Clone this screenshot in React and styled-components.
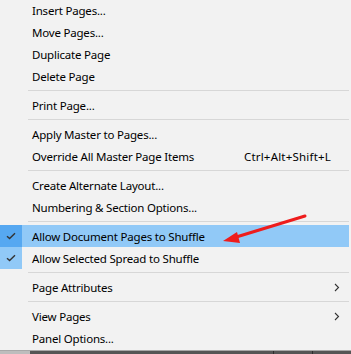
import React from "react";
import styled, { createGlobalStyle } from "styled-components";

const GlobalStyle = createGlobalStyle`
  html, body {
    margin: 0;
    padding: 0;
    background: #f2f2f2;
  }
  body {
    width: 351px;
    height: 354px;
    overflow: hidden;
    font-family: "Segoe UI", "Noto Sans", "Open Sans", sans-serif;
  }
`;

const groups = [
  [
    { label: "Insert Pages..." },
    { label: "Move Pages..." },
    { label: "Duplicate Page" },
    { label: "Delete Page" },
  ],
  [{ label: "Print Page..." }],
  [
    { label: "Apply Master to Pages..." },
    { label: "Override All Master Page Items", shortcut: "Ctrl+Alt+Shift+L" },
  ],
  [
    { label: "Create Alternate Layout..." },
    { label: "Numbering & Section Options..." },
  ],
  [
    { label: "Allow Document Pages to Shuffle", checked: true, hover: true },
    { label: "Allow Selected Spread to Shuffle", checked: true },
  ],
  [{ label: "Page Attributes", submenu: true }],
  [{ label: "View Pages", submenu: true }, { label: "Panel Options..." }],
];

const CheckIcon = () => (
  <svg width="10" height="8" viewBox="0 0 10 8">
    <path d="M1 4.2 L3.6 6.6 L9 1.2" fill="none" stroke="#333" strokeWidth="1.4" />
  </svg>
);

const Chevron = () => (
  <svg width="6" height="9" viewBox="0 0 6 9">
    <path d="M1 1 L4.5 4.5 L1 8" fill="none" stroke="#333" strokeWidth="1.1" />
  </svg>
);

const App = () => {
  return (
    <>
      <GlobalStyle />
      <Page>
        <Menu>
          {groups.map((group, gi) => (
            <React.Fragment key={gi}>
              {gi > 0 && <Separator />}
              {group.map((item) => (
                <Item key={item.label} $hover={item.hover}>
                  <CheckCell $checked={item.checked} $hover={item.hover}>
                    {item.checked && <CheckIcon />}
                  </CheckCell>
                  <Label>{item.label}</Label>
                  {item.shortcut && <Shortcut>{item.shortcut}</Shortcut>}
                  {item.submenu && (
                    <SubArrow>
                      <Chevron />
                    </SubArrow>
                  )}
                </Item>
              ))}
            </React.Fragment>
          ))}
        </Menu>
        <BottomBar>
          <BarLeft />
          <BarTick style={{ left: 273 }} />
          <BarTick style={{ left: 312 }} />
        </BottomBar>
        <RedArrow width="351" height="354" viewBox="0 0 351 354">
          <line x1="305" y1="216" x2="233" y2="238" stroke="#ee1c1c" strokeWidth="3" strokeLinecap="round" />
          <polygon points="223,241 237,232 240,243" fill="#ee1c1c" />
        </RedArrow>
      </Page>
    </>
  );
};

export default App;

const Page = styled.div`
  position: relative;
  width: 351px;
  height: 354px;
  background: #f2f2f2;
  display: flex;
  flex-direction: column;
`;

const Menu = styled.div`
  display: flex;
  flex-direction: column;
  margin-top: -1px;
  padding-right: 2px;
  height: 351px;
`;

const Item = styled.div`
  display: flex;
  align-items: center;
  height: 22px;
  flex-shrink: 0;
  background: ${({ $hover }) => ($hover ? "#91c9f7" : "transparent")};
  font-size: 11.5px;
  color: #000;
`;

const CheckCell = styled.div`
  width: 22px;
  height: 100%;
  display: flex;
  align-items: center;
  justify-content: center;
  flex-shrink: 0;
  background: ${({ $checked, $hover }) =>
    $hover ? "#56a8f1" : $checked ? "#91c9f7" : "transparent"};
`;

const Label = styled.span`
  margin-left: 10px;
  flex: 1;
  white-space: nowrap;
  letter-spacing: -0.2px;
`;

const Shortcut = styled.span`
  margin-right: 18px;
  white-space: nowrap;
  letter-spacing: 0.2px;
`;

const SubArrow = styled.span`
  display: flex;
  align-items: center;
  margin-right: 9px;
`;

const Separator = styled.div`
  height: 1px;
  margin: 3px 0 3px 28px;
  background: #d7d7d7;
  flex-shrink: 0;
`;

const BottomBar = styled.div`
  position: relative;
  flex: 1;
  border-top: 1px solid #a8a8a8;
  background: #555;
  display: flex;
`;

const BarLeft = styled.div`
  width: 30px;
  background: #bdbdbd;
`;

const BarTick = styled.div`
  position: absolute;
  top: 0;
  bottom: 0;
  width: 1px;
  background: #2c2c2c;
`;

const RedArrow = styled.svg`
  position: absolute;
  left: 0;
  top: 0;
  pointer-events: none;
`;
